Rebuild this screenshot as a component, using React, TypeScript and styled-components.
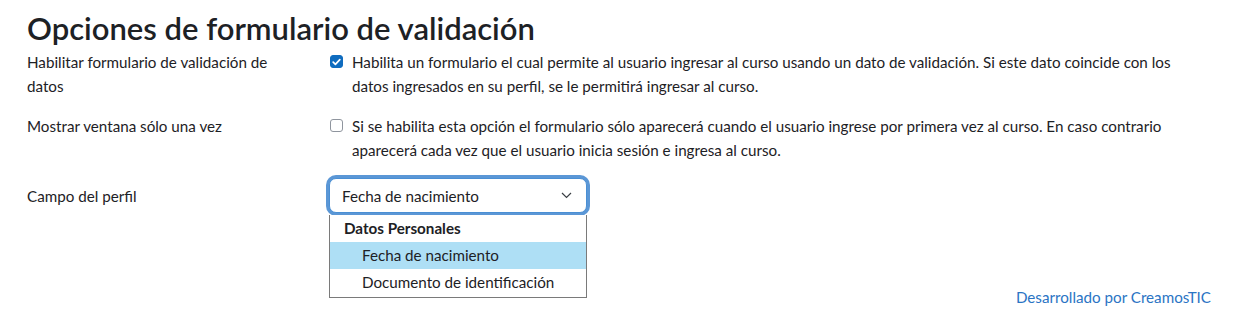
import styled, { createGlobalStyle } from 'styled-components';

const GlobalStyle = createGlobalStyle`
  html, body {
    margin: 0;
    padding: 0;
    background: #ffffff;
  }
  body {
    font-family: Lato, "Noto Sans", "Liberation Sans", sans-serif;
    font-size: 15.2px;
    color: #1d2125;
  }
`;

const Page = styled.main`
  width: 1256px;
  height: 311px;
  box-sizing: border-box;
  padding: 10px 45px 0 27px;
  overflow: hidden;
`;

const Title = styled.h2`
  margin: 0 0 4px;
  font-size: 31px;
  line-height: 36px;
  font-weight: 600;
  color: #1d2125;
`;

const Rows = styled.div`
  display: grid;
  gap: 16px;
`;

const Row = styled.div<{ $center?: boolean }>`
  display: grid;
  grid-template-columns: 302px 1fr;
  align-items: ${({ $center }) => ($center ? 'center' : 'start')};
`;

const Label = styled.div`
  max-width: 262px;
  line-height: 24px;
`;

const CheckLine = styled.label`
  display: flex;
  align-items: flex-start;
  gap: 9px;
  padding-left: 1px;
  line-height: 24px;
`;

const Text = styled.span`
  max-width: 852px;
`;

const Box = styled.span<{ $checked?: boolean }>`
  flex: none;
  width: 13px;
  height: 13px;
  margin-top: 5px;
  box-sizing: border-box;
  border-radius: 3px;
  display: grid;
  place-items: center;
  background: ${({ $checked }) => ($checked ? '#0f6cbf' : '#ffffff')};
  border: 1px solid ${({ $checked }) => ($checked ? '#0f6cbf' : '#8f959e')};
`;

const SelectWrap = styled.div`
  position: relative;
  width: 258px;
`;

const Select = styled.div`
  height: 35px;
  box-sizing: border-box;
  display: flex;
  align-items: center;
  justify-content: space-between;
  padding: 0 14px 0 12px;
  border: 1px solid #4a8fd4;
  border-radius: 7px;
  box-shadow: 0 0 0 3px #5b97d6;
  background: #ffffff;
  color: #1d2125;
`;

const ListBox = styled.div`
  position: absolute;
  top: 37px;
  left: 0;
  width: 258px;
  box-sizing: border-box;
  border: 1px solid #7a7a7a;
  border-top: none;
  background: #ffffff;
  padding-bottom: 1px;
`;

const Group = styled.div`
  height: 27px;
  line-height: 27px;
  padding-left: 14px;
  font-weight: 700;
`;

const Option = styled.div<{ $active?: boolean }>`
  height: 27px;
  line-height: 27px;
  padding-left: 32px;
  background: ${({ $active }) => ($active ? '#aedff5' : 'transparent')};
`;

const Footer = styled.div`
  display: flex;
  justify-content: flex-end;
  margin-top: 74px;
`;

const Credit = styled.a`
  color: #2a74c4;
  text-decoration: none;
  line-height: 20px;
`;

function Check() {
  return (
    <svg width="9" height="8" viewBox="0 0 9 8" fill="none">
      <path d="M1.2 4.2 3.4 6.3 7.8 1.6" stroke="#ffffff" strokeWidth="1.7" strokeLinecap="round" strokeLinejoin="round" />
    </svg>
  );
}

export default function App() {
  return (
    <>
      <GlobalStyle />
      <Page>
        <Title>Opciones de formulario de validación</Title>
        <Rows>
          <Row>
            <Label>Habilitar formulario de validación de datos</Label>
            <CheckLine>
              <Box $checked>
                <Check />
              </Box>
              <Text>
                Habilita un formulario el cual permite al usuario ingresar al curso usando un dato de validación. Si este
                dato coincide con los datos ingresados en su perfil, se le permitirá ingresar al curso.
              </Text>
            </CheckLine>
          </Row>
          <Row>
            <Label>Mostrar ventana sólo una vez</Label>
            <CheckLine>
              <Box />
              <Text>
                Si se habilita esta opción el formulario sólo aparecerá cuando el usuario ingrese por primera vez al
                curso. En caso contrario aparecerá cada vez que el usuario inicia sesión e ingresa al curso.
              </Text>
            </CheckLine>
          </Row>
          <Row $center>
            <Label>Campo del perfil</Label>
            <SelectWrap>
              <Select>
                <span>Fecha de nacimiento</span>
                <svg width="11" height="7" viewBox="0 0 11 7" fill="none">
                  <path d="M1 1l4.5 4.5L10 1" stroke="#3a3f44" strokeWidth="1.2" />
                </svg>
              </Select>
              <ListBox>
                <Group>Datos Personales</Group>
                <Option $active>Fecha de nacimiento</Option>
                <Option>Documento de identificación</Option>
              </ListBox>
            </SelectWrap>
          </Row>
        </Rows>
        <Footer>
          <Credit href="#">Desarrollado por CreamosTIC</Credit>
        </Footer>
      </Page>
    </>
  );
}
